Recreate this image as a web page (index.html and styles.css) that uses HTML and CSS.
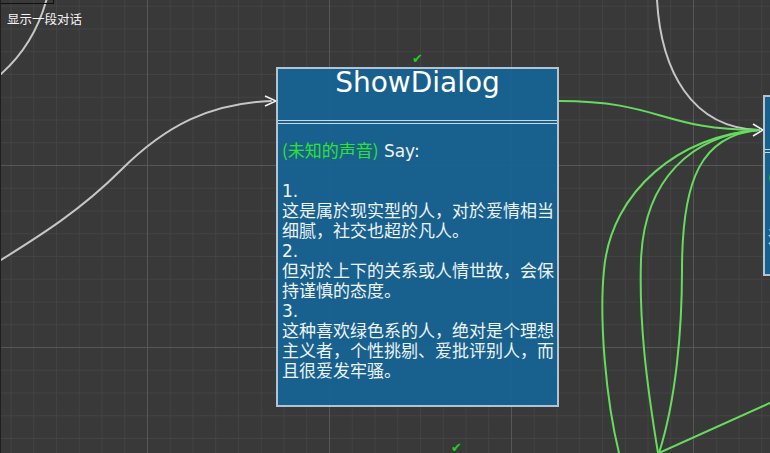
FILE: index.html
```html
<!DOCTYPE html>
<html lang="zh">
<head>
<meta charset="utf-8">
<title>ShowDialog</title>
<link rel="stylesheet" href="styles.css">
</head>
<body>
<div class="canvas">
  <svg class="wires" width="770" height="453" viewBox="0 0 770 453">
    <g class="wire gray">
      <path d="M 0 260 C 40 235, 80 210, 120 170 C 165 125, 210 103, 270 101"/>
      <path d="M 0 74 C 18 58, 36 35, 46 -2"/>
      <path d="M 656 0 C 660 70, 690 128, 758 130"/>
    </g>
    <g class="wire green">
      <path d="M 558 101 C 660 101, 660 130, 758 130"/>
      <path d="M 618 453 C 605 400, 598 320, 603 270 C 610 190, 680 135, 758 130"/>
      <path d="M 657 453 C 645 380, 638 320, 640 260 C 643 180, 690 135, 758 130"/>
      <path d="M 658 453 C 675 400, 681 330, 681 270 C 681 180, 700 135, 758 130"/>
      <path d="M 658 453 L 780 398"/>
    </g>
    <g class="arrow">
      <polyline points="264,96 275,101 264,106"/>
      <polyline points="752,124 762,130 752,136"/>
    </g>
  </svg>

  <div class="mini-node"></div>
  <div class="mini-label">显示一段对话</div>

  <div class="check check-top">✔</div>
  <div class="check check-bottom">✔</div>

  <div class="node node-main">
    <div class="node-title">ShowDialog</div>
    <div class="node-sep"></div>
    <div class="node-body">
      <p><span class="speaker">(未知的声音)</span> Say:</p>
      <p>&nbsp;</p>
      <p>1.</p>
      <p>这是属於现实型的人，对於爱情相当细腻，社交也超於凡人。</p>
      <p>2.</p>
      <p>但对於上下的关系或人情世故，会保持谨慎的态度。</p>
      <p>3.</p>
      <p>这种喜欢绿色系的人，绝对是个理想主义者，个性挑剔、爱批评别人，而且很爱发牢骚。</p>
    </div>
  </div>

  <div class="node node-right">
    <div class="node-title small"></div>
    <div class="node-sep"></div>
    <div class="node-body right-body">
      <p><span class="speaker">(未知的声音)</span> Say:</p>
      <p>&nbsp;</p>
      <p>&nbsp;</p>
      <p>这是</p>
    </div>
  </div>
</div>
</body>
</html>
```

FILE: styles.css
```css
* { box-sizing: border-box; }

html, body {
  margin: 0;
  padding: 0;
  background: #393939;
}

body {
  width: 770px;
  height: 453px;
  overflow: hidden;
  font-family: "DejaVu Sans", "Noto Sans CJK SC", sans-serif;
}

.canvas {
  position: relative;
  width: 770px;
  height: 453px;
  overflow: hidden;
  background-color: #393939;
  border-left: 1px solid #1f1f1f;
  background-origin: border-box;
  background-image:
    linear-gradient(to right, #575757 1px, transparent 1px),
    linear-gradient(to bottom, #575757 1px, transparent 1px),
    linear-gradient(to right, #434343 1px, transparent 1px),
    linear-gradient(to bottom, #434343 1px, transparent 1px);
  background-size:
    182px 182px,
    182px 182px,
    22.75px 22.75px,
    22.75px 22.75px;
  background-position:
    147px 0,
    0 165px,
    10.5px 0,
    0 5.75px;
}

.wires {
  position: absolute;
  left: 0;
  top: 0;
  overflow: visible;
}

.wire path {
  fill: none;
  stroke-width: 2;
  stroke-linecap: round;
}

.wire.gray path { stroke: #c6c6c6; }
.wire.green path { stroke: #66dc5e; }

.arrow polyline {
  fill: none;
  stroke: #f2f2f2;
  stroke-width: 1.5;
}

.mini-node {
  position: absolute;
  left: -1px;
  top: -20px;
  width: 54px;
  height: 24px;
  border: 1px solid #101010;
}

.mini-label {
  position: absolute;
  left: 6px;
  top: 10px;
  font-family: "Noto Sans CJK SC", sans-serif;
  font-size: 12.5px;
  line-height: 18px;
  color: #f4f4f4;
}

.check {
  position: absolute;
  font-family: "DejaVu Sans", sans-serif;
  font-size: 13px;
  font-weight: bold;
  line-height: 13px;
  color: #1fd11f;
}

.check-top { left: 411px; top: 52px; }
.check-bottom { left: 450px; top: 441px; }

.node {
  position: absolute;
  background: rgba(22, 100, 148, 0.93);
  border: 2px solid #b2c4d2;
  color: #eef3f6;
}

.node-main {
  left: 275px;
  top: 67px;
  width: 283px;
  height: 340px;
}

.node-right {
  left: 762px;
  top: 95px;
  width: 120px;
  height: 181px;
  border-width: 2px;
  overflow: hidden;
}

.node-title {
  height: 51px;
  font-size: 28px;
  line-height: 28px;
  text-align: center;
  color: #ffffff;
}

.node-title.small { height: 52px; }

.node-sep {
  height: 4px;
  border-top: 1px solid #c9d8e3;
  border-bottom: 1px solid #c9d8e3;
}

.node-body {
  padding: 16px 0 0 4px;
  font-size: 17px;
  line-height: 20px;
}

.node-body p {
  margin: 0;
}

.speaker {
  color: #2fe22f;
  font-family: "Noto Sans CJK SC", sans-serif;
}

.right-body {
  padding-top: 13px;
  padding-left: 3px;
  white-space: nowrap;
}
```
